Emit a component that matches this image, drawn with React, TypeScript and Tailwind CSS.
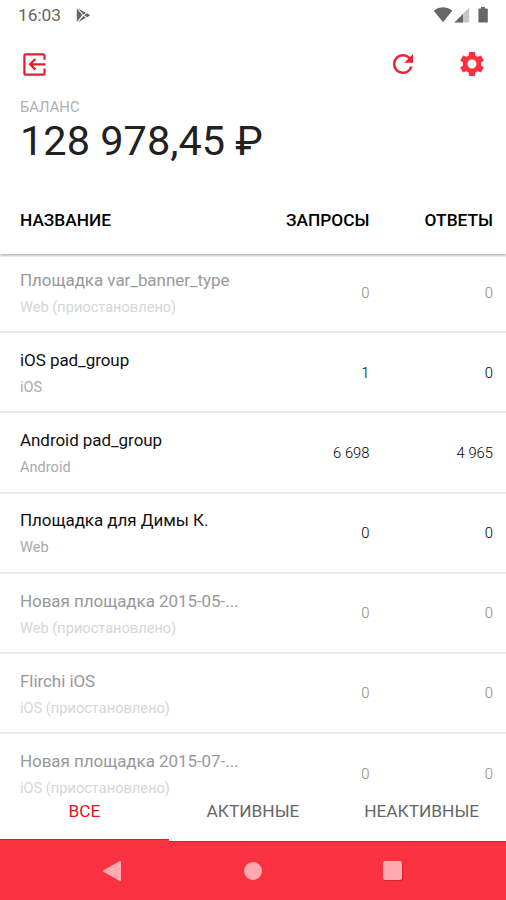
import React, { useState } from "react";
import clsx from "clsx";
import { MdRefresh, MdSettings } from "react-icons/md";

interface Site {
  name: string;
  platform: string;
  requests: string;
  responses: string;
  paused?: boolean;
}

const sites: Site[] = [
  { name: "Площадка var_banner_type", platform: "Web (приостановлено)", requests: "0", responses: "0", paused: true },
  { name: "iOS pad_group", platform: "iOS", requests: "1", responses: "0" },
  { name: "Android pad_group", platform: "Android", requests: "6 698", responses: "4 965" },
  { name: "Площадка для Димы К.", platform: "Web", requests: "0", responses: "0" },
  { name: "Новая площадка 2015-05-...", platform: "Web (приостановлено)", requests: "0", responses: "0", paused: true },
  { name: "Flirchi iOS", platform: "iOS (приостановлено)", requests: "0", responses: "0", paused: true },
  { name: "Новая площадка 2015-07-...", platform: "iOS (приостановлено)", requests: "0", responses: "0", paused: true },
];

const tabs = ["ВСЕ", "АКТИВНЫЕ", "НЕАКТИВНЫЕ"];

function StatusBar() {
  return (
    <div className="flex h-[31px] items-center pl-[18px] pr-[17px] text-[#666]">
      <span className="text-[17.3px] leading-[31px]">16:03</span>
      <svg className="ml-[15px] -mt-px" width="15" height="15" viewBox="0 0 15 15" fill="currentColor">
        <path d="M.8.6 6.4 7.1.8 13.9z" />
        <path d="M2.2.5 10 4.8 7.5 6.7zM8.2 7.2l2.9-1.9 3 1.9-3 2zM7.4 8l2.6 1.8-7.7 4.2z" />
      </svg>
      <div className="-mt-px ml-auto flex items-center">
        <svg width="20" height="16" viewBox="0 0 20 16" fill="currentColor">
          <path d="M.6 3.6Q10-3.2 19.4 3.6L10 15.2z" />
        </svg>
        <svg className="ml-px" width="16" height="16" viewBox="0 0 16 16">
          <path d="M15.2.6v14.9H.4z" fill="#c6c6c6" />
          <path d="M9 6.9v8.6H.4z" fill="currentColor" />
        </svg>
        <svg className="ml-[8px] mr-px" width="10" height="16" viewBox="0 0 10 16" fill="currentColor">
          <path d="M3 0h4v1.6h2q.8 0 .8.8v12.3q0 .8-.8.8H1.2q-.8 0-.8-.8V2.4q0-.8.8-.8H3z" />
        </svg>
      </div>
    </div>
  );
}

function Toolbar() {
  return (
    <div className="flex h-[65px] items-center pl-[23px] pr-[19px] text-[#f9303f]">
      <svg className="mt-px" width="23" height="23" viewBox="0 0 23 23" fill="none" stroke="#e1202d" strokeWidth="2.2">
        <path d="M21.5 6.8V2.6q0-1.200-1.200-1.200H2.600q-1.200 0-1.200 1.200v17.800q0 1.200 1.200 1.200h17.700q1.200 0 1.200-1.200v-4.800" />
        <path d="M22.400 11.300H7.600M12.400 6 7.100 11.300l5.300 5.300" />
      </svg>
      <MdRefresh className="ml-auto text-[#ea2231]" size={30} />
      <MdSettings className="ml-[39px]" size={30} />
    </div>
  );
}

function SiteRow({ site }: { site: Site }) {
  return (
    <div
      className={clsx(
        "flex h-[80.2px] shrink-0 items-center border-b-2 border-[#ebebeb] pl-5 pr-[13px]",
        site.paused ? "text-[#888]" : "text-black"
      )}
    >
      <div className="min-w-0 flex-1 pt-[3.500px]">
        <p className={clsx("truncate text-[17px] leading-[27px] tracking-[-0.06px]", site.paused ? "text-[#999]" : "text-[#111]")}>
          {site.name}
        </p>
        <p className={clsx("text-[14.600px] leading-[27px]", site.paused ? "text-[#d6d6d6]" : "text-[#aaa]")}>
          {site.platform}
        </p>
      </div>
      <span className="w-[100px] pt-px text-right text-[14.800px] font-light">{site.requests}</span>
      <span className="w-[123.500px] pt-px text-right text-[14.800px] font-light">{site.responses}</span>
    </div>
  );
}

export default function App() {
  const [active, setActive] = useState(0);

  return (
    <div className="flex h-[900px] w-[506px] flex-col overflow-hidden bg-white font-[Roboto,sans-serif]">
      <StatusBar />
      <Toolbar />

      <div className="h-[90px] pl-5">
        <p className="text-[14.800px] leading-[22px] text-[#b0b0b0]">БАЛАНС</p>
        <p className="text-[41.500px] leading-[46px] text-[#212121]">128 978,45 ₽</p>
      </div>

      <div className="relative z-10 flex h-[68px] items-center bg-white pl-5 pr-[13px] pt-[2px] text-[17.300px] font-medium text-black shadow-[0_2px_2px_0_rgba(0,0,0,0.26)]">
        <span className="flex-1">НАЗВАНИЕ</span>
        <span className="w-[100px] text-right">ЗАПРОСЫ</span>
        <span className="w-[123.500px] text-right">ОТВЕТЫ</span>
      </div>

      <div className="-mt-[1px] flex h-[543px] flex-col overflow-hidden">
        {sites.map((site, i) => (
          <SiteRow key={i} site={site} />
        ))}
      </div>

      <div className="grid h-[46px] grid-cols-3 bg-white">
        {tabs.map((tab, i) => (
          <button
            key={tab}
            onClick={() => setActive(i)}
            className={clsx(
              "flex flex-col items-center justify-between text-[17.300px] leading-[30px]",
              i === active ? "text-[#e01422]" : "text-[#666]"
            )}
          >
            {tab}
            <span
              className={clsx(
                "w-full border-t border-[#c72430]",
                i === active && "h-[3px] bg-[#fa3140]"
              )}
            />
          </button>
        ))}
      </div>

      <div className="flex h-[58px] items-center justify-between bg-[#fa3140] pb-px pl-[102px] pr-[104px]">
        <svg width="20" height="22" viewBox="0 0 20 22" fill="#ffa9b1">
          <path d="M17.500 1.200q1.500-.7 1.500 1v17.600q0 1.700-1.500 1L1.800 12q-1.500-1 0-2z" />
        </svg>
        <div className="size-[18px] rounded-full bg-[#ffa9b1]" />
        <div className="size-[19px] rounded-[2px] bg-[#ffa9b1] shadow-[1px_1px_1px_rgba(0,0,0,0.2)]" />
      </div>
    </div>
  );
}
